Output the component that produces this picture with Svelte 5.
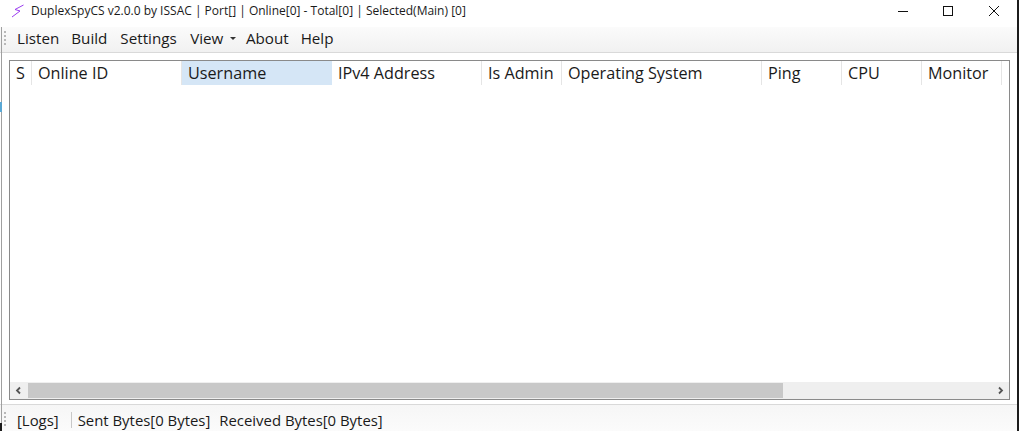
<script>
  const menus = [
    { label: 'Listen', gap: 12 },
    { label: 'Build', gap: 13 },
    { label: 'Settings', gap: 13.5 },
    { label: 'View', gap: 10, caret: true },
    { label: 'About', gap: 12 },
    { label: 'Help', gap: 0 }
  ];
  const columns = [
    { label: 'S', width: 22 },
    { label: 'Online ID', width: 150 },
    { label: 'Username', width: 150, active: true },
    { label: 'IPv4 Address', width: 150 },
    { label: 'Is Admin', width: 80 },
    { label: 'Operating System', width: 200 },
    { label: 'Ping', width: 80 },
    { label: 'CPU', width: 80 },
    { label: 'Monitor', width: 80 }
  ];
</script>

<div class="window">
  <span class="edge"></span>
  <span class="blip"></span>
  <span class="corner"></span>

  <header class="titlebar">
    <svg class="logo" width="16" height="16" viewBox="0 0 16 16" aria-hidden="true">
      <path d="M13.500 2 L5 6.500 L10 8 L2 14" fill="none" stroke="#9b3df0" stroke-width="1" />
    </svg>
    <span class="title">DuplexSpyCS v2.0.0 by ISSAC | Port[] | Online[0] - Total[0] | Selected(Main) [0]</span>
    <div class="controls">
      <svg width="46" height="20" viewBox="0 0 46 20" aria-hidden="true"><path d="M20 10.500h10" stroke="#111" fill="none" /></svg>
      <svg width="46" height="20" viewBox="0 0 46 20" aria-hidden="true"><rect x="19.500" y="5.500" width="9" height="9" stroke="#111" fill="none" /></svg>
      <svg width="46" height="20" viewBox="0 0 46 20" aria-hidden="true"><path d="M19 5l10 10M29 5l-10 10" stroke="#111" fill="none" /></svg>
    </div>
  </header>

  <nav class="toolbar">
    <span class="grip"></span>
    {#each menus as m}
      <span class="menu" style="margin-right:{m.gap}px">{m.label}{#if m.caret}<span class="caret"></span>{/if}</span>
    {/each}
  </nav>

  <main class="content">
    <div class="list">
      <div class="head">
        {#each columns as c}
          <div class="col" class:active={c.active} style="width:{c.width}px">{c.label}</div>
        {/each}
      </div>
      <div class="rows"></div>
      <div class="scroll">
        <svg class="arrow" width="18" height="15" viewBox="0 0 18 15" aria-hidden="true"><path d="M10 4.500L7 7.500l3 3" fill="none" stroke="#555" stroke-width="1.800" /></svg>
        <div class="track"><div class="thumb"></div></div>
        <svg class="arrow" width="17" height="15" viewBox="0 0 17 15" aria-hidden="true"><path d="M7 4.500l3 3-3 3" fill="none" stroke="#555" stroke-width="1.800" /></svg>
      </div>
    </div>
  </main>

  <footer class="status">
    <span class="grip"></span>
    <span class="logs">[Logs]</span>
    <span class="sep"></span>
    <span>Sent Bytes[0 Bytes]</span>
    <span class="recv">Received Bytes[0 Bytes]</span>
  </footer>
</div>

<style>
  :global(body) { margin: 0; background: #fff; }
  .window {
    position: relative;
    width: 1019px; height: 431px; display: flex; flex-direction: column; overflow: hidden;
    font-family: "Open Sans", "Noto Sans", sans-serif; color: #1a1a1a; background: #fff;
    box-sizing: border-box; border-right: 2px solid #1c1c1c;
  }
  .edge { position: absolute; left: 1px; top: 27px; bottom: 8px; width: 1px; background: #a0a0a0; }
  .blip { position: absolute; left: 0; top: 102px; width: 2px; height: 10px; background: #5aa9d6; }
  .corner { position: absolute; left: 0; bottom: 0; width: 2px; height: 8px; background: #1c1c1c; }
  .titlebar { height: 27px; flex: none; display: flex; align-items: center; padding: 0 0 6px 10px; box-sizing: border-box; background: #fff; }
  .logo { flex: none; }
  .title { margin-left: 5px; font-size: 12px; white-space: nowrap; }
  .controls { margin-left: auto; display: flex; margin-right: 1px; }
  .toolbar {
    height: 26px; flex: none; display: flex; align-items: center; padding: 0 0 3px 4px; box-sizing: border-box;
    background: linear-gradient(#fbfbfb, #f1f1f1); border-bottom: 1px solid #d9d9d9; font-size: 15.200px;
  }
  .grip { width: 2px; height: 15px; margin-right: 11px; background: repeating-linear-gradient(#b8b8b8 0 2px, transparent 2px 4px); flex: none; }
  .menu { display: inline-flex; align-items: center; }
  .caret { margin-left: 6.500px; border: 3px solid transparent; border-top-color: #333; border-bottom-width: 0; }
  .content { flex: 1; padding: 7px 7px 4px 9px; min-height: 0; display: flex; background: #fff; border-bottom: 1px solid #d9d9d9; }
  .list { flex: 1; border: 1px solid #8a8a8a; display: flex; flex-direction: column; min-width: 0; }
  .head { display: flex; height: 24px; flex: none; font-size: 16.200px; }
  .col { box-sizing: border-box; padding-left: 6px; border-right: 1px solid #e5e5e5; line-height: 24px; white-space: nowrap; }
  .col.active { background: #d5e6f6; border-right-color: #d5e6f6; }
  .rows { flex: 1; }
  .scroll { height: 17px; flex: none; display: flex; align-items: center; background: #efefef; }
  .arrow { flex: none; }
  .track { flex: 1; height: 15px; }
  .thumb { width: 755px; height: 100%; background: #c8c8c8; }
  .status {
    height: 26px; flex: none; display: flex; align-items: center; padding-left: 4px; padding-top: 3px; box-sizing: border-box;
    background: linear-gradient(#f6f6f6, #fbfbfb); font-size: 14.900px;
  }
  .logs { margin-right: 12px; }
  .sep { width: 1px; height: 16px; background: #c8c8c8; margin-right: 6px; }
  .recv { margin-left: 9px; }
</style>
